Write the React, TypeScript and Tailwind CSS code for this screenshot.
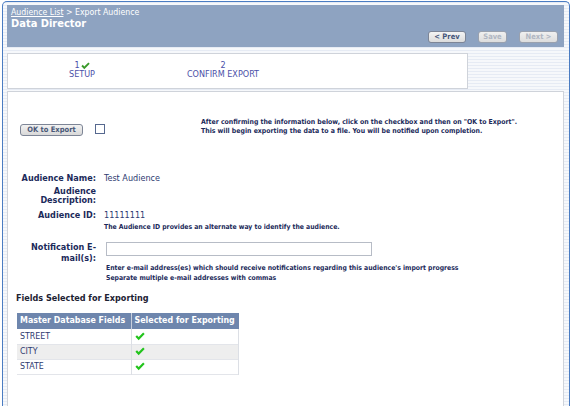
const FONT = "font-['DejaVu_Sans_Condensed','DejaVu_Sans',sans-serif]";

function Check({ className = "" }: { className?: string }) {
  return (
    <svg viewBox="0 0 12 10" className={className} aria-hidden="true">
      <path d="M0.5 5.2 L2.4 3.4 L4.4 5.6 L9.8 0.3 L11.6 2 L4.4 9.4 Z" fill="currentColor" />
    </svg>
  );
}

const fields = ["STREET", "CITY", "STATE"];

export default function App() {
  return (
    <div className={`h-[406px] w-[572px] overflow-hidden bg-white pl-[2px] pt-px ${FONT}`}>
      <div className="flex h-[420px] w-[568px] flex-col rounded-t-[5px] border border-b-0 border-[#4a7cc2] bg-[repeating-linear-gradient(180deg,#e6ebf4_0px,#e6ebf4_1px,#f6f8fb_1px,#f6f8fb_3px)] pl-[4px] pr-[5px] pt-[3px]">
        {/* Header */}
        <div className="flex h-[42px] items-end justify-between bg-[#8ea3c1] pb-[4px] pl-[4px] pr-[6px]">
          <div className="self-start pt-[2px] text-white">
            <div className="text-[8.7px] leading-[10px]">
              <span className="underline">Audience List</span> &gt; Export Audience
            </div>
            <div className="text-[11px] font-bold leading-[13px]">Data Director</div>
          </div>
          <div className="flex gap-[12px]">
            <button className="h-[12px] w-[38px] rounded-[3px] border border-[#7d8596] bg-[linear-gradient(#f4f4f4,#dcdcdc)] text-[7.5px] font-bold leading-[10px] text-[#44557a]">
              &lt; Prev
            </button>
            <button className="h-[12px] w-[29px] rounded-[3px] border border-[#9aa1ae] bg-[linear-gradient(#f0f0f0,#dddddd)] text-[7.5px] font-bold leading-[10px] text-[#b0b6c2]">
              Save
            </button>
            <button className="h-[12px] w-[39px] rounded-[3px] border border-[#9aa1ae] bg-[linear-gradient(#f0f0f0,#dddddd)] text-[7.5px] font-bold leading-[10px] text-[#b0b6c2]">
              Next &gt;
            </button>
          </div>
        </div>

        {/* Steps */}
        <div className="mt-[6px] flex h-[36px] w-[461px] border border-[#cfd3da] bg-white pt-[7px] text-[9px] leading-[9px] text-[#4b50a8]">
          <div className="flex w-[148px] flex-col items-center">
            <div className="flex items-center">
              1<Check className="ml-px h-[8px] w-[9px] text-[#3a9a2a]" />
            </div>
            <div>SETUP</div>
          </div>
          <div className="flex w-[134px] flex-col items-center">
            <div>2</div>
            <div>CONFIRM EXPORT</div>
          </div>
        </div>

        {/* Content */}
        <div className="mt-[2px] flex-1 border border-[#cfd3da] bg-white text-[#1b2a5a]">
          <div className="flex items-start pt-[26px]">
            <button className="ml-[12px] mt-[6px] h-[12px] w-[63px] rounded-[3px] border border-[#7d8596] bg-[linear-gradient(#f2f2f2,#d8d8d8)] text-[7.5px] font-bold leading-[10px] text-[#4a5878]">
              OK to Export
            </button>
            <div className="ml-[12px] mt-[6px] h-[10px] w-[10px] border border-[#56688f] bg-white" />
            <div className="ml-[96px] text-[6.9px] font-bold leading-[9px]">
              <div>After confirming the information below, click on the checkbox and then on "OK to Export".</div>
              <div>This will begin exporting the data to a file. You will be notified upon completion.</div>
            </div>
          </div>

          <div className="mt-[37px] flex text-[9px] leading-[10px]">
            <div className="w-[88px] text-right font-bold">Audience Name:</div>
            <div className="ml-[8px] text-[#2e3a70]">Test Audience</div>
          </div>
          <div className="mt-[4px] flex text-[9px] leading-[9px]">
            <div className="w-[88px] text-right font-bold">
              Audience
              <br />
              Description:
            </div>
          </div>
          <div className="mt-[5px] flex text-[9px] leading-[10px]">
            <div className="w-[88px] text-right font-bold">Audience ID:</div>
            <div className="ml-[8px]">
              <div className="text-[#2e3a70]">11111111</div>
              <div className="mt-[3px] text-[6.8px] font-bold leading-[9px]">
                The Audience ID provides an alternate way to identify the audience.
              </div>
            </div>
          </div>

          <div className="mt-[10px] flex text-[9px]">
            <div className="w-[88px] text-right font-bold leading-[11px]">
              Notification E-
              <br />
              mail(s):
            </div>
            <div className="ml-[10px]">
              <input className="block h-[14px] w-[266px] border border-[#b7bcc6] bg-white" />
              <div className="mt-[7px] text-[6.8px] font-bold leading-[10px]">
                <div>Enter e-mail address(es) which should receive notifications regarding this audience's import progress</div>
                <div>Separate multiple e-mail addresses with commas</div>
              </div>
            </div>
          </div>

          <div className="ml-[8px] mt-[10px] text-[9px] font-bold leading-[11px] text-[#1c2233]">
            Fields Selected for Exporting
          </div>

          <table className="ml-[9px] mt-[9px] w-[222px] border-collapse text-[8.8px]">
            <thead>
              <tr className="h-[16px] bg-[#6e86ad] text-left font-bold text-white">
                <th className="w-[114px] border-r border-[#c8cfdc] pl-[3px]">Master Database Fields</th>
                <th className="pl-[3px]">Selected for Exporting</th>
              </tr>
            </thead>
            <tbody>
              {fields.map((field, i) => (
                <tr
                  key={field}
                  className={`h-[15px] border-b border-[#e3e5ea] ${i === 1 ? "bg-[#eeeeee]" : "bg-white"}`}
                >
                  <td className="border-r border-[#dcdfe5] pl-[3px] text-[#2e3a70]">{field}</td>
                  <td className="border-r border-[#dcdfe5] pl-[3px]">
                    <Check className="h-[9px] w-[10px] text-[#22c41c]" />
                  </td>
                </tr>
              ))}
            </tbody>
          </table>
        </div>
      </div>
    </div>
  );
}
